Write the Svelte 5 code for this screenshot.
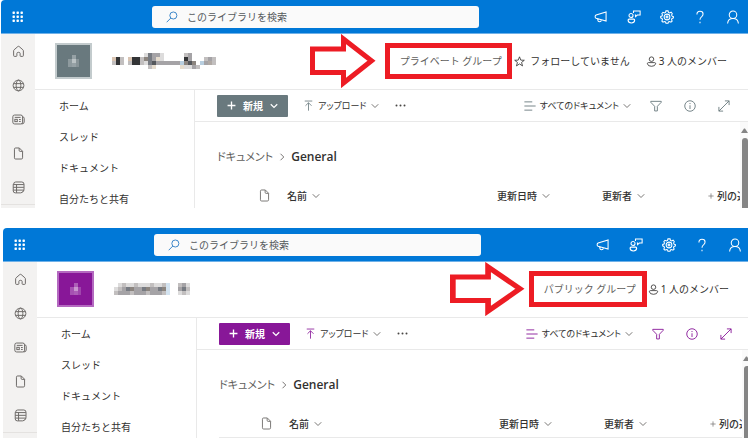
<script>
  const panels = [
    {
      id: 'private',
      theme: '#69797e',
      avatarEdge: '#c3cbcd',
      group: 'プライベート グループ',
      follow: true,
      members: '3 人のメンバー',
      title: [
        '........kfhhk.....jh......',
        'rdj.rddjgfhmk.....dh...jhj',
        'jdj.jddjkfehhhhhhlgeg.lhij',
        '.........jm......mkkhj....'
      ]
    },
    {
      id: 'public',
      theme: '#881798',
      avatarEdge: '#b469c0',
      group: 'パブリック グループ',
      follow: false,
      members: '1 人のメンバー',
      title: [
        '.kjkkjkkkjkkjb..jhk',
        'kjhfghhfghhfgb..hfj',
        'jhhhjhhhjhhhjb..kjk'
      ]
    }
  ];

  const shades = {
    d: '#333436', e: '#55585c', f: '#777b82', g: '#8c857f', h: '#a5a3a6',
    i: '#b0a9a4', j: '#c2bfbf', k: '#dddcdc', l: '#b9cfe0', m: '#e6dccd',
    r: '#d9c4b2', b: '#d3e3f0'
  };

  const links = ['ホーム', 'スレッド', 'ドキュメント', '自分たちと共有'];
  const rail = ['home', 'globe', 'news', 'file', 'list'];
  const top = [
    ['megaphone', 'お知らせ'],
    ['feedback', 'チャット'],
    ['gear', '設定'],
    ['help', 'ヘルプ'],
    ['person', 'アカウント']
  ];
  const tools = [
    ['filter', 'フィルター'],
    ['info', '詳細'],
    ['expand', '展開']
  ];
</script>

{#snippet icon(name, size)}
  <svg class="icon" width={size} height={size} viewBox="0 0 16 16" aria-hidden="true">
    {#if name === 'home'}
      <path d="M2 7.2 Q2 6.4 2.6 5.9 L7.2 1.9 Q8 1.3 8.8 1.9 L13.4 5.9 Q14 6.4 14 7.2 V13 Q14 14 13 14 H10.8 Q10 14 10 13.2 V10.4 Q10 9 8 9 Q6 9 6 10.4 V13.2 Q6 14 5.2 14 H3 Q2 14 2 13 Z" />
    {:else if name === 'globe'}
      <circle cx="8" cy="8" r="6.6" /><ellipse cx="8" cy="8" rx="2.9" ry="6.6" />
      <path d="M1.8 5.7 H14.2 M1.8 10.3 H14.2" />
    {:else if name === 'news'}
      <rect x="1" y="2.5" width="12" height="11" rx="2.2" />
      <path d="M13 4.6 Q15 4.8 15 6.6 V11 Q15 13.5 12 13.5 M3.4 5.4 H10.6 M8.6 8 H10.8 M8.6 10.4 H10.8" />
      <rect x="3.5" y="7.8" width="3" height="2.8" />
    {:else if name === 'file'}
      <path d="M4.4 1.2 H9 L13 5.2 V13.3 Q13 14.8 11.5 14.8 H4.4 Q3 14.8 3 13.3 V2.7 Q3 1.2 4.4 1.2 Z M8.8 1.4 V4.2 Q8.8 5.4 10 5.4 H12.8" />
    {:else if name === 'list'}
      <path d="M2 4 Q2 1.2 4.6 1.2 H12 Q14.8 1.2 14.8 4 V10 Q14.8 12.6 13 13.4" />
      <path d="M1.5 4.4 H14.6 M1.5 4 V12 Q1.5 14.6 4 14.6 H10.5 Q13 14.6 14.2 12 M1.5 7.8 H14.6 M1.5 11.2 H14.4 M5.6 4.4 V14.4" />
    {:else if name === 'megaphone'}
      <path d="M13.8 2.2 V12.6 L2.4 9.4 Q1.3 8.9 1.3 7.6 Q1.3 6.3 2.4 5.8 Z M4.3 10 V11.4 Q4.5 13.4 6.4 13.4 Q8.2 13.4 8.6 11.4" />
    {:else if name === 'feedback'}
      <circle cx="4.6" cy="6.2" r="2.3" />
      <path d="M2.4 10.4 H7.6 Q8.8 10.4 8.8 11.6 Q8.5 14.8 5 14.8 Q1.5 14.8 1.2 11.6 Q1.2 10.4 2.4 10.4 Z M7.4 3.4 V1.2 H15 V5.8 H11.8 L9.8 7.6 V5.8 H9" />
    {:else if name === 'gear'}
      <path d="M6.8 1 H9.2 L9.7 2.8 L11 3.4 L12.7 2.5 L14 4 L13.3 5.8 L13.8 7 L15.3 7.6 V9 L13.7 9.7 L13.2 11 L13.9 12.6 L12.5 13.9 L10.9 13.1 L9.7 13.6 L9.2 15.1 H6.8 L6.3 13.6 L5 13.1 L3.4 13.9 L2.1 12.6 L2.8 11 L2.3 9.7 L0.8 9 V7.4 L2.3 6.9 L2.8 5.6 L2.1 4 L3.4 2.6 L5 3.4 L6.3 2.8 Z" />
      <circle cx="8" cy="8" r="3.3" /><circle cx="8" cy="8" r="1.1" />
    {:else if name === 'help'}
      <path d="M4.5 5 Q4.5 1.4 8 1.4 Q11.5 1.4 11.5 4.6 Q11.5 6.4 9.7 7.8 Q8 9 8 11.2 M8 13.4 V15" />
    {:else if name === 'person'}
      <circle cx="8" cy="5.5" r="4.3" /><path d="M1.8 15.4 Q2.4 9.8 8 9.8 Q13.6 9.8 14.2 15.4" />
    {:else if name === 'member'}
      <circle cx="8" cy="4.6" r="3.3" />
      <path d="M3.6 9.6 H12.4 Q14 9.6 14 11.2 Q13.4 15 8 15 Q2.6 15 2 11.2 Q2 9.6 3.6 9.6 Z" />
    {:else if name === 'star'}
      <path d="M8 1.2 L9.9 6 L15 6.2 L11 9.4 L12.4 14.4 L8 11.5 L3.6 14.4 L5 9.4 L1 6.2 L6.1 6 Z" />
    {:else if name === 'search'}
      <circle cx="9.8" cy="6" r="4.7" /><path d="M6.4 9.4 L0.9 15" />
    {:else if name === 'upload'}
      <path d="M2.5 1.5 H13.5 M8 15.5 V4 M3.6 8.4 L8 4 L12.4 8.4" />
    {:else if name === 'plus'}
      <path d="M8 1 V15 M1 8 H15" />
    {:else if name === 'lines'}
      <path d="M0.5 2.5 H11 M0.5 8 H15.5 M0.5 13.5 H11" />
    {:else if name === 'filter'}
      <path d="M1 1.8 H15 V3 L9.8 8.4 V14.6 H6.2 V8.4 L1 3 Z" />
    {:else if name === 'info'}
      <circle cx="8" cy="8" r="7" /><path d="M8 7 V12 M8 4 V5.4" />
    {:else if name === 'expand'}
      <path d="M1.2 14.8 L14.8 1.2 M9.2 1.2 H14.8 V6.8 M1.2 9.2 V14.8 H6.8" />
    {:else if name === 'down'}
      <path d="M1.5 4.5 L8 11 L14.5 4.5" />
    {:else if name === 'right'}
      <path d="M5 1.5 L11.5 8 L5 14.5" />
    {/if}
  </svg>
{/snippet}

{#snippet mosaic(rows, label)}
  <svg class="mosaic" width={rows[0].length * 4} height={rows.length * 4} role="img" aria-label={label}>
    {#each rows as row, y}
      {#each row.split('') as cell, x}
        {#if shades[cell]}
          <rect x={x * 4} y={y * 4} width="4" height="4" fill={shades[cell]} />
        {/if}
      {/each}
    {/each}
  </svg>
{/snippet}

<main>
  {#each panels as p (p.id)}
    <section class="panel {p.id}" style="--theme: {p.theme}; --edge: {p.avatarEdge}">
      <header class="topbar">
        <button class="waffle" aria-label="アプリ起動ツール">
          <svg width="12" height="12" viewBox="0 0 12 12" aria-hidden="true">
            {#each [0, 4, 8] as y}
              {#each [0, 4, 8] as x}
                <rect x={x + 0.5} y={y + 0.5} width="2.4" height="2.4" rx="0.6" fill="#fff" />
              {/each}
            {/each}
          </svg>
        </button>
        <label class="search">
          {@render icon('search', 12)}
          <input type="text" placeholder="このライブラリを検索" aria-label="このライブラリを検索" />
        </label>
        <div class="top-actions">
          {#each top as [name, label]}
            <button aria-label={label}>{@render icon(name, 14)}</button>
          {/each}
        </div>
      </header>

      <div class="body">
        <nav class="rail" aria-label="アプリ バー">
          {#each rail as name}
            <button aria-label={name}>{@render icon(name, 13)}</button>
          {/each}
        </nav>

        <div class="site">
          <div class="site-head">
            <div class="avatar">
              <svg width="12" height="12" aria-hidden="true">
                <rect x="4" width="4" height="12" fill="#fff" opacity="0.3" />
                <rect y="4" width="4" height="8" fill="#fff" opacity="0.25" />
                <rect x="4" y="4" width="4" height="4" fill="#fff" opacity="0.35" />
                <rect x="8" y="4" width="3" height="8" fill="#fff" opacity="0.2" />
              </svg>
            </div>
            {@render mosaic(p.title, 'チーム')}
            <div class="status">
              <svg class="arrow" viewBox="0 0 66 54" preserveAspectRatio="none" aria-hidden="true">
                <path d="M2.5 15 H33.5 V5 L61.5 26.8 L33.5 49 V38.5 H2.5 Z" />
              </svg>
              <span class="group">{p.group}</span>
              {#if p.follow}
                <button class="follow">{@render icon('star', 11)}フォローしていません</button>
              {/if}
              <button class="members">{@render icon('member', 11)}{p.members}</button>
            </div>
          </div>

          <div class="columns">
            <nav class="links" aria-label="サイト">
              {#each links as link}
                <a href="#{link}">{link}</a>
              {/each}
            </nav>

            <div class="content">
              <div class="toolbar">
                <button class="new">{@render icon('plus', 9)}新規{@render icon('down', 8)}</button>
                <button class="upload">
                  <span class="tint">{@render icon('upload', 11)}</span>
                  <span class="label">アップロード</span>
                  <span class="faint">{@render icon('down', 8)}</span>
                </button>
                <button class="more" aria-label="その他">
                  <svg width="11" height="3" aria-hidden="true">
                    <circle cx="1.5" cy="1.5" r="1" /><circle cx="5.5" cy="1.5" r="1" /><circle cx="9.5" cy="1.5" r="1" />
                  </svg>
                </button>
                <button class="view">
                  <span class="tint">{@render icon('lines', 12)}</span>
                  <span class="label">すべてのドキュメント</span>
                  <span class="faint">{@render icon('down', 8)}</span>
                </button>
                <div class="tools tint">
                  {#each tools as [name, label]}
                    <button aria-label={label}>{@render icon(name, 12)}</button>
                  {/each}
                </div>
              </div>

              <div class="scroller">
                <div class="library">
                  <div class="crumbs">
                    <a href="#documents">ドキュメント</a>
                    <span class="faint">{@render icon('right', 8)}</span>
                    <strong>General</strong>
                  </div>
                  <table>
                    <thead>
                      <tr>
                        <th class="type" aria-label="種類"><span>{@render icon('file', 13)}</span></th>
                        <th><span>名前 {@render icon('down', 8)}</span></th>
                        <th class="date"><span>更新日時 {@render icon('down', 8)}</span></th>
                        <th class="by"><span>更新者 {@render icon('down', 8)}</span></th>
                        <th class="add"><span>{@render icon('plus', 6)} 列の追加</span></th>
                      </tr>
                    </thead>
                  </table>
                </div>
                <div class="scrollbar" aria-hidden="true">
                  <svg width="7" height="5"><path d="M0 5 L3 0.5 H4 L7 5 Z" /></svg>
                  <i></i>
                </div>
              </div>
            </div>
          </div>
        </div>
      </div>
    </section>
  {/each}
</main>

<style>
  :global(body) {
    margin: 0;
    background: #fff;
    overflow: hidden;
  }

  main {
    display: flex;
    flex-direction: column;
    gap: 20px;
    font-family: 'Noto Sans', 'Noto Sans CJK JP', sans-serif;
    font-size: 10px;
    line-height: 16px;
    color: #323130;
  }

  button {
    display: flex;
    align-items: center;
    justify-content: center;
    padding: 0;
    border: 0;
    background: none;
    font: inherit;
    color: inherit;
    white-space: nowrap;
  }

  a {
    color: inherit;
    text-decoration: none;
  }

  .icon {
    display: block;
    flex: none;
    fill: none;
    stroke: currentColor;
    stroke-width: 1.2;
  }

  .panel {
    box-sizing: border-box;
    height: 208px;
    margin-left: 1px;
    overflow: hidden;
    border-radius: 4px 0 0 0;
  }

  .public {
    height: 210px;
    margin: 0 -2px 0 3px;
  }

  .topbar {
    box-sizing: border-box;
    display: flex;
    align-items: center;
    height: 34px;
    border-bottom: 1px solid #6fb1e8;
    background: #0078d7;
    color: #fff;
  }

  .waffle {
    flex: none;
    width: 34px;
    height: 33px;
  }

  .search {
    box-sizing: border-box;
    display: flex;
    align-items: center;
    gap: 9px;
    flex: 1 1 327px;
    max-width: 327px;
    height: 22px;
    margin-left: 117px;
    padding-left: 14px;
    border-radius: 3px;
    background: #fafafa;
    color: #2b7cc4;
  }

  .search input {
    flex: 1;
    min-width: 0;
    padding: 0;
    border: 0;
    outline: 0;
    background: none;
    font: inherit;
    color: #323130;
  }

  .search input::placeholder {
    color: #55595c;
    opacity: 1;
  }

  .top-actions {
    display: flex;
    gap: 15px;
    margin-left: auto;
    padding-right: 6px;
  }

  .top-actions button {
    width: 18px;
    height: 32px;
  }

  .body {
    display: flex;
    background: linear-gradient(to right, #f3f2f1 34px, #fff 34px);
  }

  .rail {
    flex: none;
    width: 34px;
    align-self: flex-start;
    border-bottom: 1px solid #e4e2e0;
    color: #6b6866;
  }

  .rail button {
    width: 34px;
    height: 34px;
  }

  .site {
    flex: 1;
    min-width: 0;
  }

  .site-head {
    box-sizing: border-box;
    display: flex;
    align-items: center;
    height: 56px;
    padding: 0 21px 1px 20px;
    border-bottom: 1px solid #e9e9e9;
  }

  .avatar {
    box-sizing: border-box;
    display: flex;
    align-items: center;
    justify-content: center;
    width: 37px;
    height: 36px;
    margin-right: 20px;
    border: 2px solid var(--edge);
    background: var(--theme);
  }

  .mosaic {
    flex: none;
  }

  .status {
    display: flex;
    align-items: center;
    margin-left: auto;
  }

  .arrow {
    width: 66px;
    height: 54px;
    margin-right: 9px;
    fill: #fff;
    stroke: #ed1c24;
    stroke-width: 5;
  }

  .public .arrow {
    width: 75px;
    margin-right: 4px;
  }

  .group {
    box-sizing: border-box;
    min-width: 127px;
    height: 36px;
    padding: 0 3px 0 7px;
    border: 5px solid #ed1c24;
    line-height: 26px;
    text-align: center;
    white-space: nowrap;
    color: #605e5c;
  }

  .public .group {
    min-width: 118px;
  }

  .follow {
    gap: 5px;
    margin-left: 2px;
  }

  .members {
    gap: 2px;
    margin-left: 16px;
  }

  .public .members {
    margin-left: 1px;
  }

  .columns {
    display: flex;
  }

  .links {
    box-sizing: border-box;
    display: flex;
    flex-direction: column;
    flex: none;
    width: 160px;
    padding: 1px 0 0 24px;
    border-right: 1px solid #e9e9e9;
  }

  .links a {
    line-height: 31px;
  }

  .content {
    flex: 1;
    min-width: 0;
  }

  .toolbar {
    box-sizing: border-box;
    display: flex;
    align-items: center;
    height: 32px;
    padding: 0 18px 0 22px;
    border-bottom: 1px solid #e9e9e9;
  }

  .label {
    font-size: 9px;
    font-feature-settings: 'palt';
  }

  .tint {
    color: var(--theme);
  }

  .faint {
    color: #797775;
  }

  .faint .icon,
  th .icon {
    stroke-width: 2;
  }

  .new {
    gap: 7px;
    width: 71px;
    height: 22px;
    border-radius: 1px;
    background: var(--theme);
    color: #fff;
    font-weight: 700;
  }

  .new .icon {
    stroke-width: 2.4;
  }

  .upload,
  .view {
    gap: 4px;
  }

  .upload {
    margin-left: 15px;
  }

  .more {
    margin-left: 16px;
    fill: #484644;
  }

  .view {
    margin-left: auto;
  }

  .tools {
    display: flex;
    gap: 22px;
    margin-left: 19px;
  }

  .scroller {
    display: flex;
  }

  .library {
    flex: 1;
    min-width: 0;
    overflow: hidden;
    padding-left: 22px;
  }

  .crumbs {
    display: flex;
    align-items: center;
    gap: 5px;
    height: 20px;
    padding: 25px 0 15px;
    font-size: 12px;
  }

  .crumbs a {
    font-size: 11px;
    color: #605e5c;
    font-feature-settings: 'palt';
  }

  .crumbs strong {
    font-family: 'Open Sans', 'Noto Sans', sans-serif;
    font-weight: 600;
  }

  table {
    width: 100%;
    table-layout: fixed;
    border-collapse: collapse;
    border-bottom: 1px solid #e9e9e9;
  }

  th {
    height: 27px;
    padding: 0;
    font-weight: 500;
    text-align: left;
    white-space: nowrap;
  }

  th span {
    display: flex;
    align-items: center;
    gap: 5px;
  }

  th .icon {
    color: #797775;
  }

  .type {
    width: 70px;
  }

  .type span {
    padding-left: 41px;
  }

  .type .icon {
    stroke-width: 1.2;
  }

  .date {
    width: 105px;
  }

  .by {
    width: 106px;
  }

  .add {
    width: 32px;
  }

  .add span {
    gap: 3px;
  }

  .scrollbar {
    display: flex;
    flex-direction: column;
    align-items: flex-end;
    gap: 5px;
    flex: none;
    width: 8px;
    padding-top: 6px;
    background: #fafafa;
    fill: #858585;
  }

  .scrollbar svg {
    flex: none;
  }

  .scrollbar i {
    flex: 1;
    width: 6px;
    border-radius: 3px 3px 0 0;
    background: #858585;
  }
</style>
